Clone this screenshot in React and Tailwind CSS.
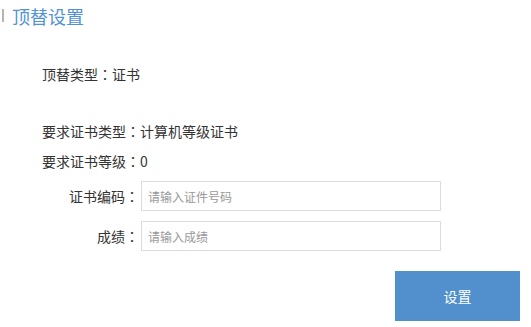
import React from "react";

const font = { fontFamily: '"Noto Sans CJK SC", "Microsoft YaHei", sans-serif' };

// centered full-width colon, as in the reference
const C = () => <span style={{ fontFamily: '"Noto Sans CJK TC", sans-serif' }}>：</span>;

const Field = ({ label, placeholder }) => (
  <div className="flex items-center h-[30px]">
    <label className="w-[141px] text-right pr-[2px] text-[14px] text-[#333]">
      {label}
      <C />
    </label>
    <input
      className="w-[300px] h-[30px] border border-[#dcdcdc] px-[6px] text-[12px] text-[#333] placeholder:text-[#999] outline-none"
      placeholder={placeholder}
    />
  </div>
);

export default function App() {
  return (
    <div className="w-[531px] h-[327px] bg-white" style={font}>
      <div className="flex items-center h-[30px] pt-[1px]">
        <div className="w-[2px] h-[13px] bg-[#b5b5b5] ml-[2px]"></div>
        <h1 className="ml-[8px] text-[18px] leading-none text-[#4f93d6]">顶替设置</h1>
      </div>

      <div className="pl-[42px] text-[14px] text-[#333]">
        <p className="mt-[34px] leading-[20px]">
          顶替类型<C />证书
        </p>
        <p className="mt-[37px] leading-[20px]">
          要求证书类型<C />计算机等级证书
        </p>
        <p className="mt-[10px] leading-[20px]">
          要求证书等级<C />0
        </p>
      </div>

      <div className="mt-[10px] flex flex-col gap-[10px]">
        <Field label="证书编码" placeholder="请输入证件号码" />
        <Field label="成绩" placeholder="请输入成绩" />
      </div>

      <div className="flex justify-end pr-[11px] mt-[20px]">
        <button className="w-[125px] h-[50px] bg-[#5190cc] text-white text-[14px]">设置</button>
      </div>
    </div>
  );
}
